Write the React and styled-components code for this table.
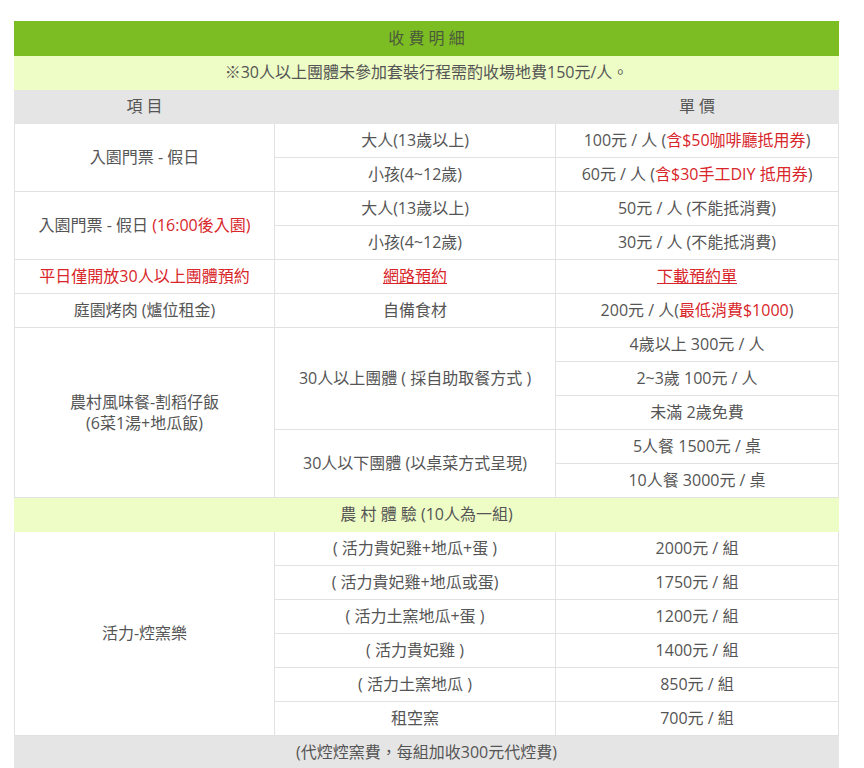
import React from 'react';
import styled, { createGlobalStyle } from 'styled-components';

const GlobalStyle = createGlobalStyle`
  body {
    margin: 0;
    background: #fff;
    font-family: "Open Sans", "Noto Sans CJK TC", sans-serif;
  }
`;

const Page = styled.div`
  padding: 21px 0 0 14px;
`;

const Table = styled.table`
  width: 824px;
  border-collapse: collapse;
  table-layout: fixed;
  font-size: 16px;
  color: #555;
  text-align: center;

  td {
    height: 33px;
    padding: 0 6px;
    border: 1px solid #e2e2e2;
    line-height: 21px;
    vertical-align: middle;
  }
`;

const bandColors = {
  green: '#7cbd24',
  lime: '#eefcc5',
  gray: '#e5e5e5',
};

const BandCell = styled.td`
  && {
    background: ${({ tone }) => bandColors[tone]};
    border-color: ${({ tone }) => bandColors[tone]};
    color: ${({ tone }) => (tone === 'green' ? '#4b5a3a' : '#555')};
  }
`;

const Red = styled.span`
  color: #d8262a;
`;

const LinkText = styled.a`
  color: #d8262a;
  text-decoration: underline;
  cursor: pointer;
`;

const App = () => (
  <Page>
    <GlobalStyle />
    <Table>
      <colgroup>
        <col style={{ width: 260 }} />
        <col style={{ width: 281 }} />
        <col style={{ width: 283 }} />
      </colgroup>
      <tbody>
        <tr>
          <BandCell tone="green" colSpan={3}>收 費 明 細</BandCell>
        </tr>
        <tr>
          <BandCell tone="lime" colSpan={3}>※30人以上團體未參加套裝行程需酌收場地費150元/人。</BandCell>
        </tr>
        <tr>
          <BandCell tone="gray">項 目</BandCell>
          <BandCell tone="gray" />
          <BandCell tone="gray">單 價</BandCell>
        </tr>
        <tr>
          <td rowSpan={2}>入園門票 - 假日</td>
          <td>大人(13歲以上)</td>
          <td>100元 / 人 (<Red>含$50咖啡廳抵用券</Red>)</td>
        </tr>
        <tr>
          <td>小孩(4~12歲)</td>
          <td>60元 / 人 (<Red>含$30手工DIY 抵用券</Red>)</td>
        </tr>
        <tr>
          <td rowSpan={2}>入園門票 - 假日 <Red>(16:00後入園)</Red></td>
          <td>大人(13歲以上)</td>
          <td>50元 / 人 (不能抵消費)</td>
        </tr>
        <tr>
          <td>小孩(4~12歲)</td>
          <td>30元 / 人 (不能抵消費)</td>
        </tr>
        <tr>
          <td><Red>平日僅開放30人以上團體預約</Red></td>
          <td><LinkText>網路預約</LinkText></td>
          <td><LinkText>下載預約單</LinkText></td>
        </tr>
        <tr>
          <td>庭園烤肉 (爐位租金)</td>
          <td>自備食材</td>
          <td>200元 / 人(<Red>最低消費$1000</Red>)</td>
        </tr>
        <tr>
          <td rowSpan={5}>農村風味餐-割稻仔飯<br />(6菜1湯+地瓜飯)</td>
          <td rowSpan={3}>30人以上團體 ( 採自助取餐方式 )</td>
          <td>4歲以上 300元 / 人</td>
        </tr>
        <tr>
          <td>2~3歲 100元 / 人</td>
        </tr>
        <tr>
          <td>未滿 2歲免費</td>
        </tr>
        <tr>
          <td rowSpan={2}>30人以下團體 (以桌菜方式呈現)</td>
          <td>5人餐 1500元 / 桌</td>
        </tr>
        <tr>
          <td>10人餐 3000元 / 桌</td>
        </tr>
        <tr>
          <BandCell tone="lime" colSpan={3}>農 村 體 驗 (10人為一組)</BandCell>
        </tr>
        <tr>
          <td rowSpan={6}>活力-焢窯樂</td>
          <td>( 活力貴妃雞+地瓜+蛋 )</td>
          <td>2000元 / 組</td>
        </tr>
        <tr>
          <td>( 活力貴妃雞+地瓜或蛋)</td>
          <td>1750元 / 組</td>
        </tr>
        <tr>
          <td>( 活力土窯地瓜+蛋 )</td>
          <td>1200元 / 組</td>
        </tr>
        <tr>
          <td>( 活力貴妃雞 )</td>
          <td>1400元 / 組</td>
        </tr>
        <tr>
          <td>( 活力土窯地瓜 )</td>
          <td>850元 / 組</td>
        </tr>
        <tr>
          <td>租空窯</td>
          <td>700元 / 組</td>
        </tr>
        <tr>
          <BandCell tone="gray" colSpan={3}>(代焢焢窯費，每組加收300元代焢費)</BandCell>
        </tr>
      </tbody>
    </Table>
  </Page>
);

export default App;
